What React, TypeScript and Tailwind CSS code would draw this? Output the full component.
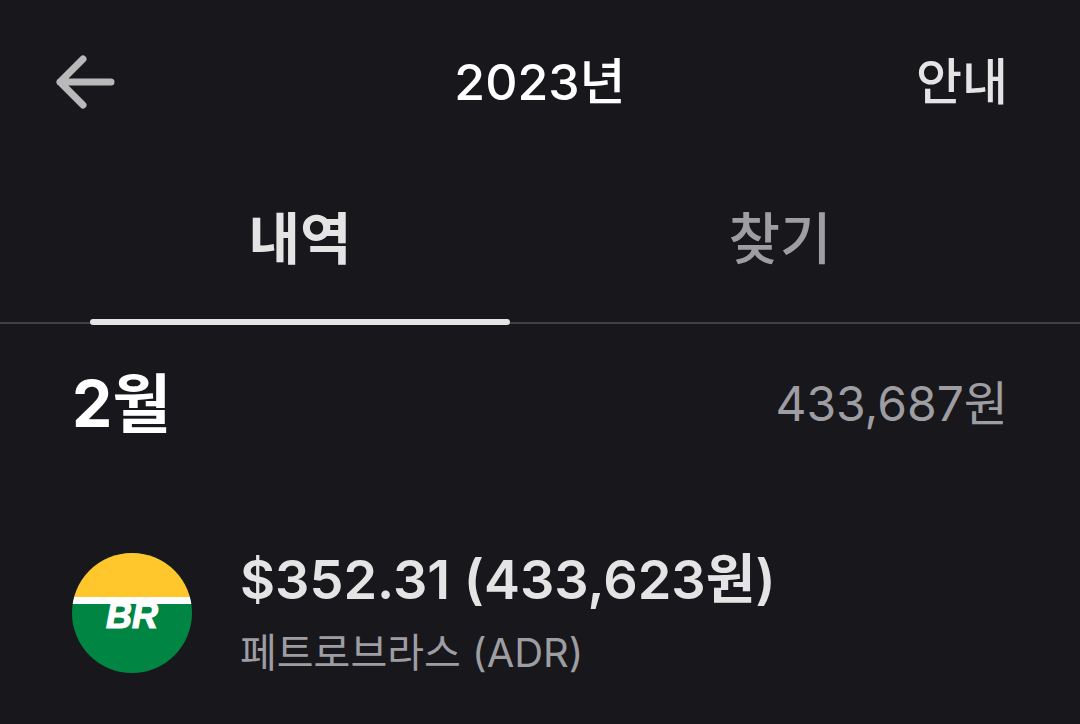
const FONT = "font-['Inter','Noto_Sans_CJK_KR',sans-serif]";

function BackIcon() {
    return (
        <svg viewBox="0 0 60 54" className="h-[54px] w-[60px]" fill="none" stroke="#b9b9b9" strokeWidth="7" strokeLinecap="round" strokeLinejoin="round" aria-hidden="true">
            <path d="M27 4 4 27l23 23M4 27h51" />
        </svg>
    );
}

function PetrobrasLogo() {
    return (
        <svg viewBox="0 0 120 120" className="size-[120px] shrink-0" role="img" aria-label="Petrobras">
            <clipPath id="disc">
                <circle cx="60" cy="60" r="60" />
            </clipPath>
            <g clipPath="url(#disc)">
                <rect width="120" height="120" fill="#008542" />
                <rect width="120" height="45" fill="#ffc72c" />
                <rect y="44" width="120" height="7" fill="#fff" />
            </g>
            <text x="60" y="75" textAnchor="middle" fill="#fff" stroke="#fff" strokeWidth="1.2" fontSize="36" fontWeight="700" fontStyle="italic" fontFamily="'Liberation Sans', sans-serif">BR</text>
        </svg>
    );
}

export default function App() {
    return (
        <main className={`min-h-screen bg-[#18171c] text-[#e4e4e5] ${FONT}`}>
            <header className="grid grid-cols-3 items-center px-14 pt-10">
                <button type="button" aria-label="뒤로" className="justify-self-start">
                    <BackIcon />
                </button>
                <h1 className="justify-self-center text-[50px] leading-[84px] font-medium text-white">2023년</h1>
                <button type="button" className="justify-self-end pr-4 text-[50px] leading-[84px] font-medium">안내</button>
            </header>

            <div role="tablist" className="mt-8 grid grid-cols-2 border-b-2 border-[#414045] px-[60px] text-[56px] leading-[84px]">
                <button type="button" role="tab" aria-selected="true" className="relative py-[41px] font-bold">
                    내역
                    <span className="absolute inset-x-[30px] -bottom-[3px] h-1.5 rounded-full bg-[#e4e4e5]" />
                </button>
                <button type="button" role="tab" aria-selected="false" className="py-[41px] font-medium text-[#9e9da2]">찾기</button>
            </div>

            <section className="px-[72px] pt-[35px]">
                <div className="flex items-center justify-between leading-[90px]">
                    <h2 className="text-[64px] font-bold text-white">2월</h2>
                    <p className="text-[48px] text-[#9e9da2]">433,687원</p>
                </div>
                <ul className="pt-[95px]">
                    <li className="flex items-center gap-12">
                        <PetrobrasLogo />
                        <div>
                            <p className="text-[54px] leading-[72px] font-semibold">$352.31 (433,623원)</p>
                            <p className="pt-2 text-[40px] leading-[58px] text-[#9e9da2]">페트로브라스 (ADR)</p>
                        </div>
                    </li>
                </ul>
            </section>
        </main>
    );
}
